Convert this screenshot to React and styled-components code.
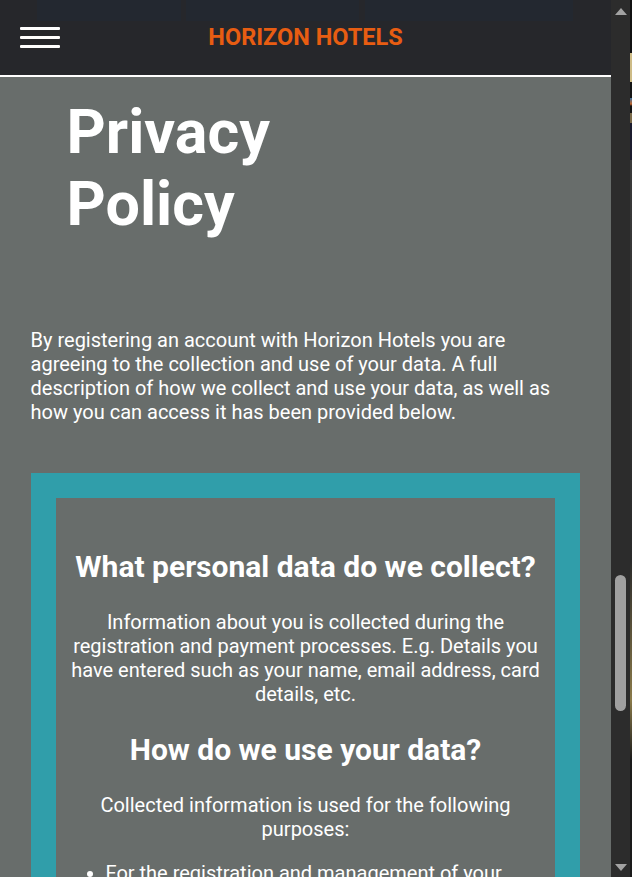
import React from 'react';
import styled, { createGlobalStyle } from 'styled-components';

const Global = createGlobalStyle`
  html, body {
    margin: 0;
    padding: 0;
    height: 100%;
    overflow: hidden;
    background: #686d6b;
  }
  body {
    font-family: Roboto, "Noto Sans", "Liberation Sans", Arial, sans-serif;
    -webkit-font-smoothing: antialiased;
  }
  #root { height: 100%; }
`;

const Shell = styled.div`
  display: flex;
  width: 632px;
  height: 877px;
  overflow: hidden;
`;

const Viewport = styled.div`
  width: 611px;
  flex: none;
  display: flex;
  flex-direction: column;
  background: #686d6b;
  overflow: hidden;
`;

const Header = styled.header`
  flex: none;
  height: 75px;
  border-bottom: 2px solid #ffffff;
  background-color: #26272b;
  background-image:
    linear-gradient(#232830, #232830),
    linear-gradient(#232830, #232830),
    linear-gradient(#232830, #232830);
  background-size: 144px 21px, 173px 21px, 208px 21px;
  background-position: 37px 0, 186px 0, 365px 0;
  background-repeat: no-repeat;
  display: grid;
  grid-template-columns: 1fr auto 1fr;
  align-items: center;
`;

const Burger = styled.button`
  justify-self: start;
  margin: 0 0 0 20px;
  width: 40px;
  padding: 0;
  border: 0;
  background: none;
  display: flex;
  flex-direction: column;
  gap: 6px;
  cursor: pointer;
`;

const BurgerBar = styled.span`
  display: block;
  height: 3px;
  background: #ffffff;
  border-radius: 1px;
`;

const Brand = styled.div`
  font-family: Roboto, "Liberation Sans", sans-serif;
  font-weight: 700;
  font-size: 23.5px;
  color: #e85d12;
  letter-spacing: 0;
  white-space: nowrap;
  margin-top: -1px;
`;

const Main = styled.main`
  padding: 19px 5% 0;
  color: #ffffff;
`;

const PageTitle = styled.h1`
  margin: 0;
  padding-left: 36px;
  width: 260px;
  font-size: 61px;
  font-weight: 700;
  line-height: normal;
  color: #ffffff;
`;

const Intro = styled.p`
  margin: 88px 0 0;
  font-size: 20px;
  line-height: normal;
`;

const PolicyBox = styled.section`
  margin-top: 49px;
  border: 25px solid #309eaa;
  padding: 25px 10px;
  text-align: center;
`;

const SectionTitle = styled.h2`
  margin: 26px 0;
  font-size: 30px;
  font-weight: 700;
  line-height: normal;
`;

const BodyText = styled.p`
  margin: 20px 0;
  font-size: 20px;
  line-height: normal;
`;

const List = styled.ul`
  margin: 20px 0;
  padding-left: 40px;
  text-align: left;
  font-size: 20px;
  line-height: normal;
`;

const ScrollBar = styled.div`
  width: 19px;
  flex: none;
  background: #2c2c2c;
  display: flex;
  flex-direction: column;
  align-items: center;
`;

const ArrowUp = styled.div`
  width: 0;
  height: 0;
  margin-top: 8px;
  border-left: 6.5px solid transparent;
  border-right: 6.5px solid transparent;
  border-bottom: 7px solid #a3a3a3;
`;

const ArrowDown = styled.div`
  width: 0;
  height: 0;
  margin-bottom: 6px;
  border-left: 6.5px solid transparent;
  border-right: 6.5px solid transparent;
  border-top: 7px solid #a3a3a3;
`;

const Track = styled.div`
  flex: 1;
  width: 100%;
  display: flex;
  flex-direction: column;
  align-items: center;
`;

const Thumb = styled.div`
  margin-top: ${(p) => p.$offset}px;
  width: 11px;
  height: ${(p) => p.$size}px;
  border-radius: 6px;
  background: #a0a0a0;
`;

const Edge = styled.div`
  width: 2px;
  flex: none;
  background: linear-gradient(
    to bottom,
    #111111 0,
    #111111 53px,
    #cdbb86 53px,
    #cdbb86 82px,
    #151515 82px,
    #151515 98px,
    #3a6f9c 98px,
    #c0642c 104px,
    #151515 106px,
    #151515 113px,
    #7a6a4a 113px,
    #7a6a4a 123px,
    #1c1c2e 123px,
    #1c1c2e 160px,
    #3a3a3a 160px,
    #2a2a2a 560px,
    #8a7a4a 700px,
    #1a1a1a 760px,
    #1a1a1a 100%
  );
`;

export default function App() {
  return (
    <>
      <Global />
      <Shell>
        <Viewport>
          <Header>
            <Burger aria-label="Menu">
              <BurgerBar />
              <BurgerBar />
              <BurgerBar />
            </Burger>
            <Brand>HORIZON HOTELS</Brand>
            <span />
          </Header>
          <Main>
            <PageTitle>Privacy Policy</PageTitle>
            <Intro>
              By registering an account with Horizon Hotels you are agreeing to the collection and use
              of your data. A full description of how we collect and use your data, as well as how you
              can access it has been provided below.
            </Intro>
            <PolicyBox>
              <SectionTitle>What personal data do we collect?</SectionTitle>
              <BodyText>
                Information about you is collected during the registration and payment processes. E.g.
                Details you have entered such as your name, email address, card details, etc.
              </BodyText>
              <SectionTitle>How do we use your data?</SectionTitle>
              <BodyText>Collected information is used for the following purposes:</BodyText>
              <List>
                <li>For the registration and management of your account and bookings.</li>
                <li>To process payments for your reservations.</li>
                <li>To contact you about your stay.</li>
              </List>
            </PolicyBox>
          </Main>
        </Viewport>
        <ScrollBar>
          <ArrowUp />
          <Track>
            <Thumb $offset={560} $size={136} />
          </Track>
          <ArrowDown />
        </ScrollBar>
        <Edge />
      </Shell>
    </>
  );
}
